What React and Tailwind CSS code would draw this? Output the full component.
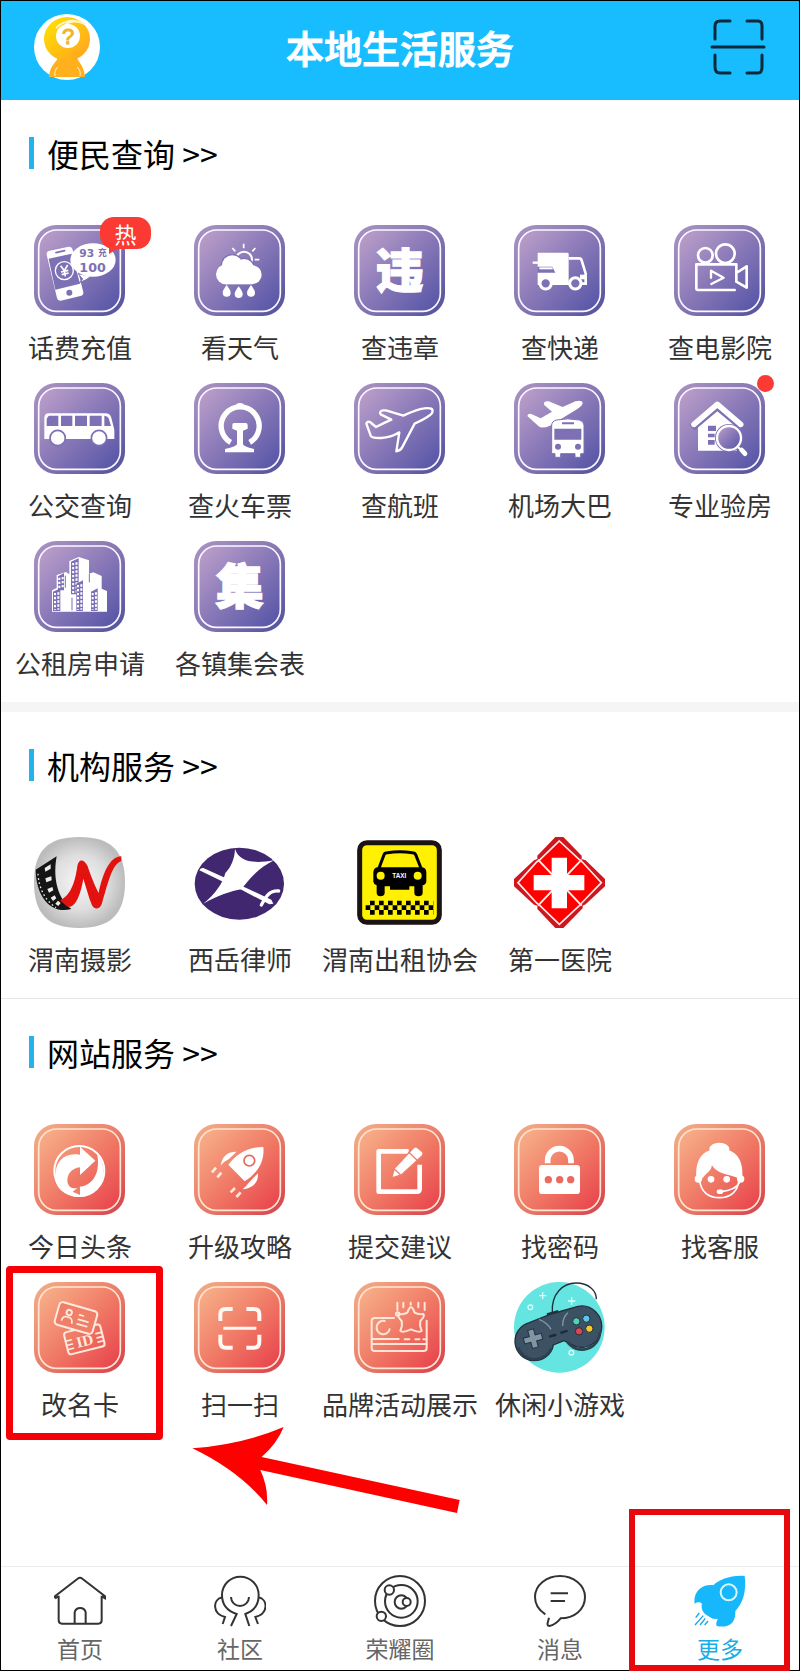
import clsx from "clsx";

const WINDOW = "#7d70b4";
const CORAL = "#ef7f69";
const CJK = "'Noto Sans CJK SC', sans-serif";
const STAR =
  "M171 76 Q176 76 182 92 Q192 98 208 96 Q214 102 199 117 Q196 130 203 146 Q198 154 171 142 Q144 154 139 146 Q146 130 143 117 Q128 102 134 96 Q150 98 160 92 Q166 76 171 76Z";

/**
 * Rounded tile with the thin inner frame, shared by most services.
 * @param {string} tone - "purple" or "coral".
 */
const Tile = ({ tone, children }) => (
  <svg viewBox="0 0 273 273" className="size-[91px]" aria-hidden="true">
    <rect width="273" height="273" rx="66" fill={`url(#${tone}-edge)`} />
    <rect
      x="14"
      y="15"
      width="245"
      height="244"
      rx="54"
      fill={`url(#${tone})`}
      stroke={tone === "purple" ? "#fbf7ff" : "#ffe6d2"}
      strokeWidth="5"
    />
    {children}
  </svg>
);

/** Gradients used by every tile. */
const Gradients = () => (
  <svg width="0" height="0" className="absolute" aria-hidden="true">
    <defs>
      <linearGradient id="purple-edge" x1="0" y1="0" x2="1" y2="1">
        <stop offset="0" stopColor="#ab92c2" />
        <stop offset="0.5" stopColor="#8677b3" />
        <stop offset="1" stopColor="#51519b" />
      </linearGradient>
      <linearGradient id="purple" x1="0" y1="0" x2="1" y2="1">
        <stop offset="0" stopColor="#bfa2cc" />
        <stop offset="0.5" stopColor="#8878b7" />
        <stop offset="1" stopColor="#5353a6" />
      </linearGradient>
      <linearGradient id="coral-edge" x1="0" y1="0" x2="1" y2="1">
        <stop offset="0" stopColor="#f5ae88" />
        <stop offset="0.5" stopColor="#e97f6b" />
        <stop offset="1" stopColor="#d63f4c" />
      </linearGradient>
      <linearGradient id="coral" x1="0" y1="0" x2="1" y2="1">
        <stop offset="0" stopColor="#f8b48c" />
        <stop offset="0.5" stopColor="#f07c67" />
        <stop offset="1" stopColor="#e83f4a" />
      </linearGradient>
      <radialGradient id="silver">
        <stop offset="0" stopColor="#f6f6f6" />
        <stop offset="0.6" stopColor="#dedede" />
        <stop offset="1" stopColor="#bcbcbc" />
      </radialGradient>
      <linearGradient id="gold" x1="0" y1="0" x2="1" y2="1">
        <stop offset="0" stopColor="#ffe500" />
        <stop offset="1" stopColor="#ff9f22" />
      </linearGradient>
    </defs>
  </svg>
);

const PhoneIcon = () => (
  <Tile tone="purple">
    <path d="M44 78 L104 65 Q113 64 116 74 L148 202 Q149 209 142 212 L80 227 Q71 228 69 219 L38 89 Q37 80 44 78Z" fill="#fff" />
    <path d="M44 101 L114 86 L138 176 L64 194Z" fill={WINDOW} />
    <path d="M66 83 L92 77" stroke={WINDOW} strokeWidth="5" strokeLinecap="round" />
    <circle cx="106" cy="203" r="9" fill={WINDOW} />
    <circle cx="91" cy="137" r="27" fill="none" stroke="#fff" strokeWidth="4" />
    <path d="M80 122 L91 137 L101 120 M91 137 L94 154 M81 141 L103 136 M83 149 L104 144" fill="none" stroke="#fff" strokeWidth="5" />
    <path d="M132 146 L146 162 Q141 170 134 174 Q156 166 172 154Z" fill="#fff" stroke={WINDOW} strokeWidth="3" />
    <ellipse cx="177" cy="105" rx="68" ry="50" fill="#fff" />
    <text x="136" y="96" fontSize="32" fontWeight="700" fill={WINDOW} fontFamily="DejaVu Sans">93</text>
    <text x="192" y="94" fontSize="26" fontWeight="700" fill={WINDOW} fontFamily={CJK}>充</text>
    <text x="136" y="140" fontSize="38" fontWeight="700" fill={WINDOW} fontFamily="DejaVu Sans">100</text>
  </Tile>
);

const WeatherIcon = () => (
  <Tile tone="purple">
    <circle cx="150" cy="104" r="24" fill="none" stroke="#fff" strokeWidth="6" />
    <path d="M149 56 V70 M115 69 L124 79 M184 69 L175 79 M182 104 H196" stroke="#fff" strokeWidth="5" />
    <g stroke={WINDOW} strokeWidth="8">
      <circle cx="115" cy="122" r="31" />
      <circle cx="150" cy="132" r="30" />
    </g>
    <g fill="#fff">
      <circle cx="96" cy="148" r="30" />
      <circle cx="115" cy="122" r="31" />
      <circle cx="150" cy="132" r="30" />
      <circle cx="175" cy="149" r="28" />
      <rect x="94" y="140" width="82" height="38" />
      <path d="M98 180 Q110 196 110 203 A12 12 0 0 1 86 203 Q86 196 98 180Z" />
      <path d="M134 184 Q146 200 146 207 A12 12 0 0 1 122 207 Q122 200 134 184Z" />
      <path d="M171 180 Q183 196 183 203 A12 12 0 0 1 159 203 Q159 196 171 180Z" />
    </g>
  </Tile>
);

/** Tile whose drawing is one heavy character. */
const CharIcon = ({ char }) => (
  <Tile tone="purple">
    <text
      x="137"
      y="190"
      fontSize="144"
      fontWeight="900"
      textAnchor="middle"
      fill="#fff"
      stroke="#fff"
      strokeWidth="4"
      fontFamily={CJK}
    >
      {char}
    </text>
  </Tile>
);

const TruckIcon = () => (
  <Tile tone="purple">
    <path d="M71 83 H160 Q164 83 164 87 V180 H71Z" fill="#fff" />
    <path d="M56 113 H80" stroke="#fff" strokeWidth="7" />
    <path d="M70 104 L80 108 M70 125 H114 Q118 126 118 131 L124 143 H70Z" fill={WINDOW} />
    <path d="M76 130 H116" stroke="#fff" strokeWidth="6" />
    <path d="M164 100 H196 Q201 100 203 106 L215 146 V176 H160" fill="none" stroke="#fff" strokeWidth="8" />
    <path d="M198 156 H215" stroke="#fff" strokeWidth="14" />
    <g fill={WINDOW} stroke="#fff" strokeWidth="9">
      <circle cx="95" cy="175" r="17" />
      <circle cx="184" cy="175" r="17" />
    </g>
  </Tile>
);

const CinemaIcon = () => (
  <Tile tone="purple">
    <g fill="none" stroke="#fff" strokeWidth="8" strokeLinecap="round" strokeLinejoin="round">
      <circle cx="94" cy="91" r="22" />
      <circle cx="154" cy="86" r="28" />
      <path d="M182 195 H72 Q67 195 67 190 V118 H187 V170 L218 188 V124 L187 144" />
      <path d="M111 158 V137 L149 158 L112 177" strokeWidth="7" />
    </g>
  </Tile>
);

const BusIcon = () => (
  <Tile tone="purple">
    <path d="M44 91 H214 Q228 91 232 104 L241 140 V168 H31 V104 Q32 91 44 91Z" fill="#fff" />
    <path d="M46 98 H73 V129 H38 V110 Q40 99 46 98Z M81 98 H115 V129 H81Z M123 98 H159 V129 H123Z M167 98 H203 V129 H167Z M211 98 Q220 98 224 106 L231 129 H211Z" fill={WINDOW} />
    <g fill="#fff" stroke={WINDOW} strokeWidth="5">
      <circle cx="71" cy="165" r="23" />
      <circle cx="195" cy="165" r="23" />
    </g>
  </Tile>
);

const TrainIcon = () => (
  <Tile tone="purple">
    <path d="M110 178 A57 57 0 1 1 167 178" fill="none" stroke="#fff" strokeWidth="16" />
    <path d="M122 74 Q124 60 138 60 Q152 60 154 74Z" fill="#fff" />
    <path d="M120 120 H155 Q161 120 161 127 V137 L147 143 V184 Q148 190 180 198 V208 H93 V198 Q128 190 129 184 V143 L115 137 V127 Q115 120 120 120Z" fill="#fff" />
  </Tile>
);

const FlightIcon = () => (
  <Tile tone="purple">
    <path
      d="M37 122 Q40 114 48 117 L66 132 Q90 120 112 110 L80 94 Q74 86 86 82 L96 82 L148 98 Q190 78 210 76 Q240 72 235 88 Q232 98 182 122 L144 194 Q140 202 127 205 L136 148 Q110 164 82 165 Q54 166 50 158Z"
      fill="none"
      stroke="#fff"
      strokeWidth="7"
      strokeLinejoin="round"
    />
  </Tile>
);

const AirportBusIcon = () => (
  <Tile tone="purple">
    <path d="M40 99 Q42 90 52 93 L80 106 L114 86 L90 65 Q88 53 104 55 L146 72 L184 55 Q204 50 206 60 Q206 68 190 78 L108 128 Q84 138 74 130Z" fill="#fff" />
    <path d="M128 111 Q161 104 196 111 Q209 114 210 126 V212 H200 V223 H183 V212 H140 V223 H123 V212 H113 V126 Q114 114 128 111Z" fill="#fff" stroke={WINDOW} strokeWidth="3" />
    <path d="M144 121 H180 M124 140 H199 V167 H124Z" fill={WINDOW} stroke={WINDOW} strokeWidth="6" />
    <circle cx="132" cy="191" r="9" fill={WINDOW} />
    <circle cx="192" cy="191" r="9" fill={WINDOW} />
  </Tile>
);

const HouseCheckIcon = () => (
  <Tile tone="purple">
    <path d="M72 130 L130 80 L188 130 V203 H72Z" fill="#fff" />
    <path d="M54 134 L130 70 L206 134" fill="none" stroke={WINDOW} strokeWidth="22" />
    <path d="M60 124 L130 64 L200 124" fill="none" stroke="#fff" strokeWidth="17" strokeLinecap="round" strokeLinejoin="round" />
    <path d="M102 128 H126 V144 H102Z M102 152 H122 V163 H102Z M102 171 H122 V185 H102Z" fill={WINDOW} />
    <path d="M144 186 L186 208" stroke={WINDOW} strokeWidth="6" />
    <circle cx="165" cy="165" r="42" fill={WINDOW} />
    <circle cx="165" cy="165" r="36" fill="url(#purple)" stroke="#fff" strokeWidth="7" />
    <path d="M192 192 L212 212" stroke="#fff" strokeWidth="7" />
    <path d="M203 201 L213 212" stroke="#fff" strokeWidth="14" strokeLinecap="round" />
  </Tile>
);

/** Front faces of the towers: x, y, width and height. */
const TOWERS = [
  [72, 104, 18, 44],
  [111, 60, 23, 100],
  [57, 150, 22, 60],
  [127, 126, 20, 84],
  [171, 150, 20, 60],
];

const TowersIcon = () => (
  <Tile tone="purple">
    <path d="M54 212 V148 L68 141 V102 L96 93 L106 100 V60 L134 48 L165 58 V98 L178 94 L203 105 V143 L219 150 V212Z" fill="#fff" />
    <path d="M94 140 V104 M114 208 V170 M166 98 V124" stroke={WINDOW} strokeWidth="3" />
    {TOWERS.map(([x, y, width, height]) => (
      <g key={`${x}-${y}`}>
        <path d={`M${x} ${y + 2} L${x + width} ${y - 8} V${y + height} H${x}Z`} fill={WINDOW} />
        <path
          d={`M${x + width / 2 - 5} ${y + 6} V${y + height - 4} M${x + width / 2 + 5} ${y + 4} V${y + height - 4}`}
          stroke="#fff"
          strokeWidth="6"
          strokeDasharray="7 5"
        />
      </g>
    ))}
  </Tile>
);

const PhotoLogo = () => (
  <svg viewBox="0 0 273 273" className="size-[91px]" aria-hidden="true">
    <path d="M136 0 C230 0 273 40 273 136 C273 232 230 273 136 273 C42 273 0 232 0 136 C0 40 42 0 136 0Z" fill="url(#silver)" />
    <path d="M5 98 L68 58 C58 112 64 178 112 216 C54 232 6 184 5 98Z" fill="#151515" />
    <path d="M32 93 L50 82 V95 L34 104Z M34 124 L52 118 L53 130 L37 136Z M40 156 L55 150 L58 160 L45 167Z M50 182 L62 175 L67 184 L57 192Z M64 200 L72 191 L80 198 L73 207Z" fill="#eee" />
    <path d="M12 110 Q16 178 66 212" fill="none" stroke="#eee" strokeWidth="4" strokeDasharray="5 8" />
    <path d="M78 190 C112 176 124 130 130 88 C134 64 150 66 161 88 C168 110 182 146 194 168 C204 120 224 58 262 58 V72 C236 80 224 130 205 195 C200 219 180 219 174 205 C164 180 156 150 148 125 C140 172 124 217 98 208Z" fill="#e3120f" />
  </svg>
);

const LawLogo = () => (
  <svg viewBox="0 0 273 273" className="size-[91px]" aria-hidden="true">
    <ellipse cx="136" cy="140" rx="134" ry="108" fill="#40276f" />
    <path d="M123 36 C136 76 180 80 240 70 C196 92 168 122 142 157 C112 162 70 176 28 200 C64 170 86 140 94 108 C110 92 122 66 123 36Z" fill="#fff" />
    <path d="M16 100 Q20 92 28 93 L96 124 L90 136Z M134 154 L144 147 L232 188 L238 200 L226 202Z" fill="#fff" />
    <path d="M254 162 C226 160 216 178 202 204" fill="none" stroke="#fff" strokeWidth="10" strokeLinecap="round" />
  </svg>
);

const TaxiLogo = () => (
  <svg viewBox="0 0 273 273" className="size-[91px]" aria-hidden="true">
    <rect x="17" y="17" width="239" height="239" rx="22" fill="#fff100" stroke="#1a1311" strokeWidth="15" />
    <path d="M74 96 L90 53 Q92 47 100 47 Q137 41 175 47 Q183 47 185 53 L202 96" fill="none" stroke="#000" strokeWidth="9" />
    <path d="M70 91 H204 Q217 93 217 106 V134 Q214 144 206 145 V168 Q205 178 193 178 Q182 178 181 168 V148 H166 V158 H108 V148 H92 V168 Q91 178 79 178 Q69 178 68 168 V145 Q59 142 58 134 V106 Q59 92 70 91Z" fill="#000" />
    <circle cx="80" cy="116" r="12" fill="#fff100" />
    <circle cx="191" cy="116" r="12" fill="#fff100" />
    <text x="136" y="122" fontSize="19" fontWeight="700" textAnchor="middle" fill="#fff" fontFamily="Liberation Sans">TAXI</text>
    {[0, 1, 2].map((row) => (
      <path
        key={row}
        d={`M${row === 1 ? 35 : 48} ${198 + row * 14} H238`}
        stroke="#000"
        strokeWidth="14"
        strokeDasharray="14 13"
      />
    ))}
  </svg>
);

const HospitalLogo = () => (
  <svg viewBox="0 0 273 273" className="size-[91px]" aria-hidden="true">
    <path d="M124 0 H148 L203 56 V66 L215 70 L273 126 V148 L215 202 L206 206 V214 L148 273 H124 L70 216 V206 L60 203 L0 148 V126 L60 70 L70 66 V56Z" fill="#d0161d" />
    <path d="M136 12 L196 68 L205 75 L262 137 L203 198 L196 206 L136 262 L78 206 L68 198 L12 137 L68 75 L78 68Z" fill="#fe0000" stroke="#ffeceb" strokeWidth="5" />
    <path d="M72 68 L203 206 M203 68 L72 206" stroke="#ffeceb" strokeWidth="6" />
    <path d="M113 62 H159 V114 H211 V160 H159 V214 H113 V160 H59 V114 H113Z" fill="#fff" />
  </svg>
);

const NewsIcon = () => (
  <Tile tone="coral">
    <circle cx="136" cy="141" r="75" fill="none" stroke="#fff" strokeWidth="6" />
    <path d="M64 152 C66 110 92 84 138 92 V68 L184 110 L138 153 V130 C112 132 96 154 101 178 C106 192 120 198 138 188 V218 C96 218 60 194 64 152Z" fill="#fff" />
    <path d="M136 188 C172 186 200 152 190 92 C224 128 214 214 136 218Z" fill="#fff" />
    <path d="M138 185 L116 203 L138 213Z" fill={CORAL} />
  </Tile>
);

const UpgradeIcon = () => (
  <Tile tone="coral">
    <g fill="#fff">
      <path d="M208 69 C168 68 130 85 103 122 L152 172 C194 145 212 110 208 69Z" />
      <path d="M128 83 C104 82 84 94 80 126 C90 110 98 112 108 102Z" />
      <path d="M192 148 C194 172 180 192 146 196 C160 184 162 178 174 166Z" />
    </g>
    <circle cx="166" cy="110" r="16" fill="none" stroke="#e8685f" strokeWidth="5" />
    <path d="M54 145 L66 131 M70 160 L82 146 M110 205 L123 192 M127 219 L140 205" stroke="#ffeadd" strokeWidth="8" />
  </Tile>
);

const SuggestIcon = () => (
  <Tile tone="coral">
    <path d="M164 82 H74 V203 H188 Q197 203 197 194 V122" fill="none" stroke="#fff" strokeWidth="14" strokeLinejoin="round" />
    <path d="M113 162 L121 133 L180 70 Q186 66 191 71 L206 84 Q209 90 204 96 L142 153Z" fill="#fff" stroke={CORAL} strokeWidth="4" />
    <path d="M164 84 L191 110 M120 134 L140 153" stroke={CORAL} strokeWidth="4" />
  </Tile>
);

const PasswordIcon = () => (
  <Tile tone="coral">
    <path d="M101 118 V109 a35 35 0 0 1 70 0 V118" fill="none" stroke="#fff" strokeWidth="17" />
    <rect x="75" y="123" width="123" height="87" rx="10" fill="#fff" />
    <g fill="#ea6a5f">
      <circle cx="103" cy="167" r="11" />
      <circle cx="137" cy="167" r="11" />
      <circle cx="170" cy="167" r="11" />
    </g>
  </Tile>
);

const SupportIcon = () => (
  <Tile tone="coral">
    <path d="M77 168 C80 204 104 221 136 221 C168 221 192 204 195 168" fill="none" stroke="#fff" strokeWidth="5" />
    <g fill="#fff">
      <ellipse cx="136" cy="76" rx="30" ry="20" />
      <circle cx="73" cy="165" r="11" />
      <circle cx="200" cy="165" r="11" />
      <path d="M68 170 C60 104 88 74 136 74 C186 74 212 106 204 170 L194 166 C182 150 136 158 114 124 C110 146 92 148 80 172Z" />
      <circle cx="111" cy="166" r="10" />
      <circle cx="158" cy="166" r="10" />
      <ellipse cx="138" cy="203" rx="10" ry="7" />
    </g>
    <path d="M196 176 C188 194 168 200 140 203" fill="none" stroke="#fff" strokeWidth="5" />
  </Tile>
);

const RenameIcon = () => (
  <Tile tone="coral">
    <g fill="none" stroke="#ffeadd" strokeWidth="6" strokeLinecap="round">
      <g transform="translate(151 172) rotate(-14)">
        <rect x="-56" y="-34" width="112" height="68" rx="9" />
        <path d="M-54 -8 H-38 M-54 5 H-38 M-54 18 H-38 M54 -8 H38 M54 5 H38 M54 18 H38" strokeWidth="5" />
        <text x="0" y="20" fontSize="46" fontWeight="700" textAnchor="middle" fill="#ffeadd" stroke="none" fontFamily="Liberation Serif">ID</text>
      </g>
      <g transform="translate(126 108) rotate(16)">
        <rect x="-59" y="-35" width="118" height="70" rx="10" fill={CORAL} />
        <circle cx="-24" cy="-10" r="8" />
        <path d="M-40 18 Q-38 2 -24 4 Q-10 2 -8 18 M8 -12 H20 M8 2 H38 M8 16 H38" strokeWidth="5" />
      </g>
    </g>
  </Tile>
);

const ScanTileIcon = () => (
  <Tile tone="coral">
    <path d="M79 117 V97 Q79 81 95 81 H116 M157 81 H180 Q196 81 196 97 V117 M79 158 V180 Q79 197 95 197 H116 M157 197 H180 Q196 197 196 180 V158" fill="none" stroke="#fff8f2" strokeWidth="12" />
    <path d="M88 139 H187" stroke="#fff8f2" strokeWidth="9" />
  </Tile>
);

const BrandIcon = () => (
  <Tile tone="coral">
    <g fill="none" stroke="#ffe6d8" strokeWidth="6" strokeLinecap="round" strokeLinejoin="round">
      <path d="M120 108 H62 Q53 108 53 117 V198 Q53 207 62 207 H209 Q218 207 218 198 V116" />
      <path d="M55 171 H134 M152 172 H166 M184 172 H196 M208 172 H217 M55 186 H217" />
      <path d="M92 117 A20 20 0 1 0 107 142" />
      <path d={STAR} />
      <path d="M130 62 V84 M148 62 V76 M170 62 V68 M193 62 V76 M212 62 V84" />
      <circle cx="131" cy="96" r="5" />
    </g>
  </Tile>
);

const PAD =
  "M46 122 L112 96 L192 73 A60 62 0 1 1 172 187 L150 176 L118 189 A58 58 0 1 1 46 122Z";

const GameLogo = () => (
  <svg viewBox="0 0 273 273" className="size-[91px]" aria-hidden="true">
    <circle cx="136" cy="136" r="136" fill="#65e5e1" />
    <path d="M184 2 C224 3 252 30 247 54 L273 70 V0Z" fill="#fff" />
    <path d="M115 90 C112 36 146 3 186 3 C224 3 248 26 247 52" fill="none" stroke="#20313e" strokeWidth="4" />
    <path d="M86 30 V52 M75 41 H97 M173 46 V68 M162 57 H184" stroke="#d8fffd" strokeWidth="4" />
    <circle cx="49" cy="76" r="7" fill="none" stroke="#d8fffd" strokeWidth="4" />
    <circle cx="172" cy="212" r="7" fill="none" stroke="#d8fffd" strokeWidth="4" />
    <path d="M98 94 L132 84 L134 96 L100 106Z" fill="#20313e" />
    <path d={PAD} fill="#3c5264" stroke="#20313e" strokeWidth="4" />
    <path d="M12 196 A54 54 0 0 0 112 200 M160 180 A54 54 0 0 0 258 150" fill="none" stroke="#2d404f" strokeWidth="8" />
    <path d="M75 112 Q100 122 111 142 M146 132 Q146 104 162 92" fill="none" stroke="#8297a5" strokeWidth="4" />
    <path d="M108 163 L124 159 M142 152 L158 147" stroke="#1c2a35" strokeWidth="7" strokeLinecap="round" />
    <path d="M-9 -28 H9 V-9 H28 V9 H9 V28 H-9 V9 H-28 V-9 H-9Z" transform="translate(57 170) rotate(-15)" fill="#8196a4" stroke="#20313e" strokeWidth="3" />
    <g stroke="#20313e" strokeWidth="3">
      <circle cx="187" cy="118" r="11" fill="#57cfb2" />
      <circle cx="217" cy="110" r="11" fill="#5cc5e8" />
      <circle cx="195" cy="148" r="11" fill="#e2444f" />
      <circle cx="226" cy="140" r="11" fill="#f4cb2e" />
    </g>
  </svg>
);

const HotBadge = () => (
  <span className="absolute -top-2 left-[66px] flex h-8 w-[51px] items-center justify-center rounded-[14px] bg-[#fb3a33] text-[22px] leading-8 text-white">
    <svg viewBox="0 0 12 14" className="absolute top-6 left-2 h-3.5 w-3" aria-hidden="true">
      <path d="M1 2 V13 L12 6Z" fill="#fb3a33" />
    </svg>
    <span className="relative">热</span>
  </span>
);

const RedDot = () => (
  <span className="absolute -top-2 -right-2 size-[17px] rounded-full bg-[#fb3a33]" />
);

/** Red frame round the rename card. */
const RenameMark = () => (
  <span className="pointer-events-none absolute -top-4 -right-[3px] -bottom-5 left-1.5 rounded-sm border-[7px] border-[#f40006]" />
);

/** Arrow pointing back at the rename card. */
const ArrowMark = () => (
  <svg
    viewBox="68 78 802 258"
    className="pointer-events-none absolute top-[145px] left-8 h-[86px] w-[268px]"
    aria-hidden="true"
  >
    <path d="M68 142 Q220 130 342 78 Q322 128 276 168 L870 297 L862 336 L272 207 Q296 258 292 312 Q210 210 68 142Z" fill="#fe0000" />
  </svg>
);

const SECTIONS = [
  {
    title: "便民查询",
    divider: "border-b-[10px] border-[#f5f5f5]",
    items: [
      { label: "话费充值", icon: <PhoneIcon />, badge: <HotBadge /> },
      { label: "看天气", icon: <WeatherIcon /> },
      { label: "查违章", icon: <CharIcon char="违" /> },
      { label: "查快递", icon: <TruckIcon /> },
      { label: "查电影院", icon: <CinemaIcon /> },
      { label: "公交查询", icon: <BusIcon /> },
      { label: "查火车票", icon: <TrainIcon /> },
      { label: "查航班", icon: <FlightIcon /> },
      { label: "机场大巴", icon: <AirportBusIcon /> },
      { label: "专业验房", icon: <HouseCheckIcon />, badge: <RedDot /> },
      { label: "公租房申请", icon: <TowersIcon /> },
      { label: "各镇集会表", icon: <CharIcon char="集" /> },
    ],
  },
  {
    title: "机构服务",
    divider: "border-b border-[#e6e6e6]",
    items: [
      { label: "渭南摄影", icon: <PhotoLogo /> },
      { label: "西岳律师", icon: <LawLogo /> },
      { label: "渭南出租协会", icon: <TaxiLogo /> },
      { label: "第一医院", icon: <HospitalLogo /> },
    ],
  },
  {
    title: "网站服务",
    items: [
      { label: "今日头条", icon: <NewsIcon /> },
      { label: "升级攻略", icon: <UpgradeIcon /> },
      { label: "提交建议", icon: <SuggestIcon /> },
      { label: "找密码", icon: <PasswordIcon /> },
      { label: "找客服", icon: <SupportIcon /> },
      { label: "改名卡", icon: <RenameIcon />, mark: <RenameMark /> },
      { label: "扫一扫", icon: <ScanTileIcon />, mark: <ArrowMark /> },
      { label: "品牌活动展示", icon: <BrandIcon /> },
      { label: "休闲小游戏", icon: <GameLogo /> },
    ],
  },
];

const TABS = [
  {
    label: "首页",
    icon: (
      <>
        <path d="M3 70 V64 L70 12 Q78 5 86 12 L153 64 V70 L143 64 M3 70 L14 64" />
        <path d="M14 62 V136 Q14 146 24 146 H133 Q143 146 143 136 V62 M62 146 V112 a17 17 0 0 1 33 0 V146" />
      </>
    ),
  },
  {
    label: "社区",
    icon: (
      <path d="M51 153 L68 117 C40 108 24 88 24 60 A55 55 0 0 1 134 60 C134 88 120 108 94 117 L106 153 M51 66 A27 27 0 0 0 105 66 M24 67 C-4 74 -6 116 33 126 L26 147 M134 67 C162 74 164 116 124 126 L132 147" />
    ),
  },
  {
    label: "荣耀圈",
    icon: (
      <>
        <circle cx="78" cy="78" r="75" />
        <circle cx="82" cy="79" r="49" />
        <circle cx="82" cy="81" r="20" />
        <circle cx="98" cy="81" r="12" fill="#fff" />
        <circle cx="46" cy="45" r="14" fill="#fff" />
        <circle cx="22" cy="124" r="14" fill="#fff" />
      </>
    ),
  },
  {
    label: "消息",
    icon: (
      <path d="M34 118 C12 104 3 84 3 66 C3 30 38 3 78 3 C118 3 153 30 153 66 C153 104 120 130 80 130 C70 142 60 150 46 153 C36 152 42 142 45 128 M50 55 H102 M50 78 H93" />
    ),
  },
  {
    label: "更多",
    active: true,
    icon: (
      <g stroke="none">
        <path d="M152 3 C110 0 76 14 58 31 C26 26 -4 50 2 86 C10 80 20 80 24 87 C20 98 26 110 34 118 L56 131 L72 132 C66 140 66 148 68 153 C102 160 126 146 124 108 C146 86 158 50 152 3Z" fill="#17b7fb" />
        <circle cx="104" cy="52" r="24" fill="none" stroke="#d8f6ff" strokeWidth="6" />
        <path d="M16 114 L5 128 M28 122 L3 150 M34 130 L18 150 M42 138 L32 150" stroke="#17a6e6" strokeWidth="4" />
      </g>
    ),
  },
];

/**
 * One service with its picture and label.
 */
const Service = ({ label, icon, badge, mark }) => (
  <li className="relative">
    <a href="#" className="flex flex-col items-center gap-[15px]">
      <span className="relative pr-px">
        {icon}
        {badge}
      </span>
      <span className="text-[26px] leading-8 whitespace-nowrap text-[#333]">
        {label}
      </span>
    </a>
    {mark}
  </li>
);

const App = () => {
  return (
    <div
      lang="zh-CN"
      className="flex min-h-screen flex-col bg-white font-['Noto_Sans_CJK_SC',sans-serif] outline-1 -outline-offset-1 outline-black"
    >
      <Gradients />
      <header className="flex h-[100px] items-center justify-between bg-[#17bdff] px-[34px] pb-1.5">
        <button type="button" aria-label="我的" className="rounded-full">
          <svg viewBox="0 0 66 66" className="size-[66px]">
            <circle cx="33" cy="33" r="33" fill="#fff" />
            <path d="M24 42 H43 C43 48 50 50 51 63 H15 C16 50 24 48 24 42Z" fill="#ffb01c" />
            <ellipse cx="33" cy="25" rx="23" ry="22" fill="url(#gold)" />
            <path d="M22 14 Q34 2 51 10 Q38 4 30 12" fill="none" stroke="#fff6c4" strokeWidth="2" />
            <circle cx="34" cy="22" r="12" fill="#fff" />
            <path d="M24 53 Q20 56 21 62 M43 53 Q47 56 46 62" fill="none" stroke="#fff0d0" strokeWidth="1" />
            <text x="34" y="30" fontSize="22" textAnchor="middle" fill="#f0b429" stroke="#f0b429" strokeWidth="1" fontFamily="Liberation Sans">?</text>
          </svg>
        </button>
        <h1 className="text-[38px] leading-10 font-medium text-white [-webkit-text-stroke:1px_white]">
          本地生活服务
        </h1>
        <button type="button" aria-label="扫一扫" className="flex w-[66px] justify-end">
          <svg viewBox="0 0 56 56" className="size-14" fill="none" stroke="#0c2a3c" strokeWidth="3" strokeLinecap="round">
            <path d="M5 20 V7 Q5 2 10 2 H20 M37 2 H48 Q52 2 52 7 V20 M5 36 V48 Q5 54 10 54 H20 M37 54 H48 Q52 54 52 48 V36 M2 28 H54" />
          </svg>
        </button>
      </header>

      <main className="flex-1">
        {SECTIONS.map(({ title, divider, items }) => (
          <section key={title} className={clsx("pt-[35px] pb-[22px]", divider)}>
            <h2 className="flex items-center gap-[13px] pl-[29px] text-[32px] leading-9 text-black">
              <span className="h-8 w-[5px] bg-[#22b2ec]" />
              {title} &gt;&gt;
            </h2>
            <ul className="mt-[54px] grid grid-cols-5 gap-y-5 pb-px">
              {items.map((item) => (
                <Service key={item.label} {...item} />
              ))}
            </ul>
          </section>
        ))}
      </main>

      <nav className="grid grid-cols-5 border-t border-[#ececec] pt-2 pb-[9px]">
        {TABS.map(({ label, icon, active }) => (
          <a
            key={label}
            href="#"
            aria-current={active ? "page" : undefined}
            className={clsx(
              "relative flex flex-col items-center gap-[7px] text-[23px] leading-7",
              active ? "text-[#17aee8]" : "text-[#666]"
            )}
          >
            <svg viewBox="0 0 156 156" className="size-[52px]" fill="none" stroke="#333" strokeWidth="6" aria-hidden="true">
              {icon}
            </svg>
            {label}
            {active && (
              <span className="pointer-events-none absolute -top-[66px] right-2.5 -bottom-[9px] -left-[11px] border-[6px] border-[#e60a0f]" />
            )}
          </a>
        ))}
      </nav>
    </div>
  );
};

export default App;
